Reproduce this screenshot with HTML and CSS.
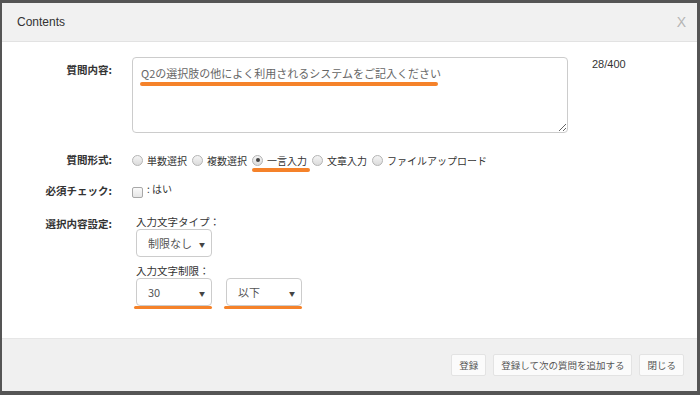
FILE: index.html
```html
<!DOCTYPE html>
<html lang="ja">
<head>
  <meta charset="UTF-8" />
  <title>Contents</title>
  <link rel="stylesheet" href="styles.css">
</head>
<body>
  <div class="page">
    <div class="modal">
      <div class="modal-header">
        <span class="modal-title">Contents</span>
        <span class="close">X</span>
      </div>

      <div class="modal-body">
        <div class="row row-text">
          <div class="label">質問内容:</div>
          <div class="field field-text">
            <div class="mark-wrap">
              <textarea class="question" readonly>Q2の選択肢の他によく利用されるシステムをご記入ください</textarea>
              <span class="mark mark-text"></span>
            </div>
            <span class="counter">28/400</span>
          </div>
        </div>

        <div class="row row-type">
          <div class="label">質問形式:</div>
          <div class="field radios">
            <span class="radio"></span><span class="opt">単数選択</span>
            <span class="radio"></span><span class="opt">複数選択</span>
            <span class="mark-wrap inline">
              <span class="radio checked"></span><span class="opt">一言入力</span>
              <span class="mark mark-radio"></span>
            </span>
            <span class="radio"></span><span class="opt">文章入力</span>
            <span class="radio"></span><span class="opt">ファイルアップロード</span>
          </div>
        </div>

        <div class="row row-check">
          <div class="label">必須チェック:</div>
          <div class="field checks">
            <span class="checkbox"></span><span class="opt">: はい</span>
          </div>
        </div>

        <div class="row row-setting">
          <div class="label">選択内容設定:</div>
          <div class="field settings">
            <div class="caption">入力文字タイプ：</div>
            <div class="selects">
              <div class="select">制限なし<span class="arrow">▼</span></div>
            </div>
            <div class="caption second">入力文字制限：</div>
            <div class="selects">
              <div class="mark-wrap">
                <div class="select">30<span class="arrow">▼</span></div>
                <span class="mark mark-select"></span>
              </div>
              <div class="mark-wrap">
                <div class="select">以下<span class="arrow">▼</span></div>
                <span class="mark mark-select"></span>
              </div>
            </div>
          </div>
        </div>
      </div>

      <div class="modal-footer">
        <button class="btn">登録</button>
        <button class="btn">登録して次の質問を追加する</button>
        <button class="btn">閉じる</button>
      </div>
    </div>
  </div>
</body>
</html>
```

FILE: styles.css
```css
html, body {
  margin: 0;
  padding: 0;
  width: 700px;
  height: 395px;
  overflow: hidden;
  background: #555;
  font-family: "Noto Sans CJK JP", "Liberation Sans", sans-serif;
}

.page {
  height: 100%;
  padding: 3px 3px 4px 2px;
  box-sizing: border-box;
}

.modal {
  height: 100%;
  display: flex;
  flex-direction: column;
  background: #fff;
}

.modal-header {
  height: 38px;
  display: flex;
  justify-content: space-between;
  align-items: center;
  padding: 0 11px 0 15px;
  background: #f1f1f1;
  border-bottom: 1px solid #e2e2e2;
}

.modal-title {
  font-family: "Liberation Sans", sans-serif;
  font-size: 12px;
  color: #333;
}

.close {
  font-family: "Liberation Sans", sans-serif;
  font-size: 14px;
  color: #b5b5b5;
}

.modal-body {
  flex: 1;
  padding-top: 15px;
}

.row {
  display: grid;
  grid-template-columns: 110px 1fr;
  column-gap: 20px;
}

.label {
  text-align: right;
  font-size: 10.5px;
  font-weight: bold;
  color: #333;
  line-height: 16px;
}

.row-text .label {
  padding-top: 5px;
}

.field-text {
  display: flex;
  align-items: flex-start;
}

.mark-wrap {
  position: relative;
}

.mark-wrap.inline {
  display: inline-flex;
  align-items: center;
}

.mark {
  position: absolute;
  height: 4px;
  border-radius: 2px;
  background: #f5822a;
}

.question {
  display: block;
  width: 436px;
  height: 76px;
  margin: 0;
  padding: 7px 8px;
  box-sizing: border-box;
  border: 1px solid #ccc;
  border-radius: 4px;
  font-family: "Noto Sans CJK JP", sans-serif;
  font-size: 11px;
  line-height: 16px;
  color: #666;
  resize: both;
  outline: none;
}

.mark-text {
  left: 8px;
  top: 25px;
  width: 298px;
}

.counter {
  margin-left: 24px;
  padding-top: 1px;
  font-family: "Liberation Sans", sans-serif;
  font-size: 11px;
  color: #333;
}

.row-type {
  margin-top: 19px;
}

.radios, .checks {
  display: flex;
  align-items: center;
  height: 16px;
}

.opt {
  font-size: 10px;
  color: #333;
  margin: 0 5px 0 4px;
}

.radio {
  width: 9px;
  height: 9px;
  border: 1px solid #b4b4b4;
  border-radius: 50%;
  background: linear-gradient(#f4f4f4, #dcdcdc);
  position: relative;
}

.radio.checked::after {
  content: "";
  position: absolute;
  left: 2.5px;
  top: 2.5px;
  width: 4px;
  height: 4px;
  border-radius: 50%;
  background: #444;
}

.mark-radio {
  left: 0;
  top: 15px;
  width: 58px;
}

.row-check {
  margin-top: 15px;
}

.checkbox {
  width: 9px;
  height: 9px;
  border: 1px solid #a8a8a8;
  border-radius: 2px;
  background: linear-gradient(#fafafa, #e6e6e6);
  margin-top: 2px;
}

.checks .opt {
  align-self: flex-start;
  margin-top: -2px;
}

.row-setting {
  margin-top: 16px;
}

.row-setting .label {
  padding-top: 1px;
}

.settings {
  padding-left: 4px;
}

.caption {
  font-size: 10.5px;
  color: #333;
  line-height: 14px;
}

.caption.second {
  margin-top: 7px;
}

.selects {
  display: flex;
  gap: 14px;
}

.select {
  width: 76px;
  height: 28px;
  box-sizing: border-box;
  border: 1px solid #ccc;
  border-radius: 4px;
  padding-left: 11px;
  display: flex;
  align-items: center;
  font-size: 11px;
  color: #555;
  position: relative;
}

.arrow {
  position: absolute;
  right: 6px;
  top: 10px;
  font-size: 6px;
  color: #444;
}

.mark-select {
  left: -2px;
  top: 28px;
  width: 78px;
  height: 3px;
}

.modal-footer {
  height: 53px;
  box-sizing: border-box;
  display: flex;
  justify-content: flex-end;
  align-items: center;
  gap: 7px;
  padding-right: 13px;
  background: #f0f0f0;
  border-top: 1px solid #e6e6e6;
}

.btn {
  height: 22px;
  padding: 0 7px;
  border: 1px solid #e3e3e3;
  border-radius: 2px;
  background: #fbfbfb;
  font-family: "Noto Sans CJK JP", sans-serif;
  font-size: 9.5px;
  color: #555;
}
```
